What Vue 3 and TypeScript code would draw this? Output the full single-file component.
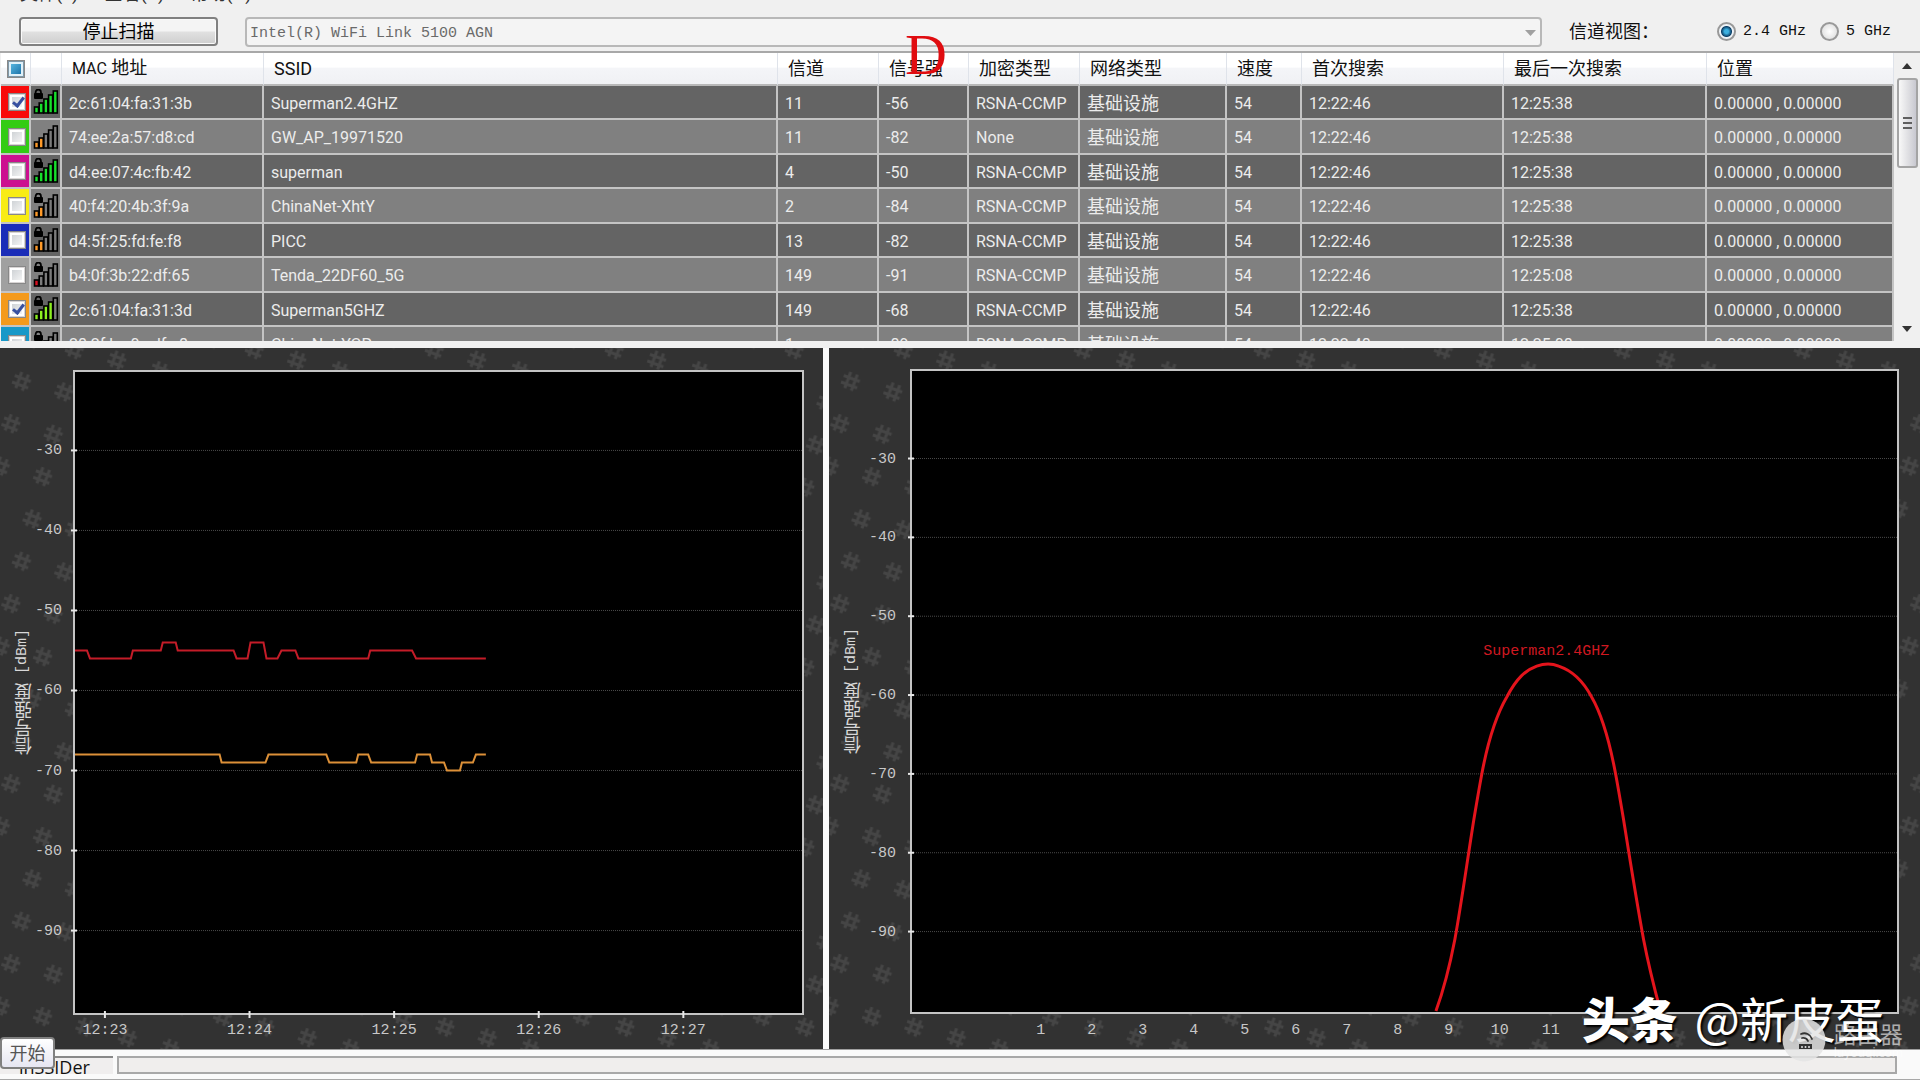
<script setup lang="ts">
import { ref } from 'vue'

interface Network {
  color: string
  checked: boolean
  locked: boolean
  bars: number
  barColor: string
  mac: string
  ssid: string
  channel: string
  rssi: string
  security: string
  first: string
  last: string
}

const net = (
  color: string, checked: boolean, locked: boolean, bars: number, barColor: string,
  mac: string, ssid: string, channel: string, rssi: string, security = 'RSNA-CCMP',
  last = '12:25:38', first = '12:22:46',
): Network => ({ color, checked, locked, bars, barColor, mac, ssid, channel, rssi, security, first, last })

const networks = ref<Network[]>([
  net('#f80a0a', true, true, 5, '#18e02c', '2c:61:04:fa:31:3b', 'Superman2.4GHZ', '11', '-56'),
  net('#33cc14', false, false, 2, '#ff9a28', '74:ee:2a:57:d8:cd', 'GW_AP_19971520', '11', '-82', 'None'),
  net('#cc1090', false, true, 5, '#18e02c', 'd4:ee:07:4c:fb:42', 'superman', '4', '-50'),
  net('#f8ec14', false, true, 2, '#ff9a28', '40:f4:20:4b:3f:9a', 'ChinaNet-XhtY', '2', '-84'),
  net('#1a2cb8', false, true, 2, '#ff9a28', 'd4:5f:25:fd:fe:f8', 'PICC', '13', '-82'),
  net('#a0a0a0', false, true, 1, '#d81020', 'b4:0f:3b:22:df:65', 'Tenda_22DF60_5G', '149', '-91', 'RSNA-CCMP', '12:25:08'),
  net('#f49a1c', true, true, 4, '#8cf020', '2c:61:04:fa:31:3d', 'Superman5GHZ', '149', '-68'),
  net('#1898c8', false, true, 2, '#ff9a28', '28:2f:bc:0c:df:a8', 'ChinaNet-YGP', '1', '-89', 'RSNA-CCMP', '12:25:08', '12:22:48'),
])

const headers = ['SSID', '信道', '信号强', '加密类型', '网络类型', '速度', '首次搜索', '最后一次搜索', '位置']
const barTops = [17, 13, 9, 5, 1]
const levels = [-30, -40, -50, -60, -70, -80, -90]
const band = ref('2.4')

const timeRange = { top: -20.2, bottom: -100.3 }
const channelRange = { top: -18.9, bottom: -100.2 }
const share = (dbm: number, r: { top: number; bottom: number }) =>
  ((r.top - dbm) / (r.top - r.bottom)) * 100

const times = ['12:23', '12:24', '12:25', '12:26', '12:27'].map((label, i) => ({
  label, at: ((30 + i * 145) / 729) * 100,
}))
const channels = Array.from({ length: 11 }, (_, i) => ({
  label: String(i + 1), at: ((129 + i * 51.1) / 987) * 100,
}))

// Each step is [from, to, level] along a 729-unit time axis.
type Step = [number, number, number]
const trace24: Step[] = [
  [0, 12, -55], [15, 56, -56], [58, 86, -55], [88, 101, -54], [103, 159, -55], [162, 173, -56],
  [176, 189, -54], [192, 203, -56], [207, 221, -55], [224, 294, -56], [296, 338, -55], [342, 412, -56],
]
const trace5: Step[] = [
  [0, 145, -68], [147, 191, -69], [194, 252, -68], [255, 282, -69], [284, 294, -68], [297, 341, -69],
  [343, 356, -68], [358, 370, -69], [373, 386, -70], [388, 399, -69], [402, 412, -68],
]
const toPoints = (steps: Step[]) =>
  steps.map(([a, b, v]) => {
    const y = share(v, timeRange).toFixed(2)
    return `${a},${y} ${b},${y}`
  }).join(' ')
</script>

<template>
  <main class="app">
    <nav class="menu"><span>文件(F)</span><span>查看(V)</span><span>帮助(H)</span></nav>

    <header class="toolbar">
      <button class="scan" type="button">停止扫描</button>
      <div class="adapter">
        <select aria-label="网卡" disabled>
          <option>Intel(R) WiFi Link 5100 AGN</option>
        </select>
        <svg width="11" height="6" viewBox="0 0 11 6"><path d="M0 0H11L5.5 6Z" fill="#a0a0a0" /></svg>
      </div>
      <fieldset class="bands">
        <legend>信道视图：</legend>
        <label><input v-model="band" type="radio" name="band" value="2.4">2.4 GHz</label>
        <label><input v-model="band" type="radio" name="band" value="5">5 GHz</label>
      </fieldset>
    </header>

    <section class="list">
      <div class="scroller">
        <table>
          <colgroup>
            <col class="w-check"><col class="w-icon"><col class="w-mac"><col><col class="w-chan">
            <col class="w-rssi"><col class="w-sec"><col class="w-type"><col class="w-speed">
            <col class="w-first"><col class="w-last"><col class="w-loc">
          </colgroup>
          <thead>
            <tr>
              <th class="pick"><input class="box mixed" type="checkbox" aria-label="全选"></th>
              <th></th>
              <th><span class="latin">MAC</span> 地址</th>
              <th v-for="h in headers" :key="h">{{ h }}</th>
            </tr>
          </thead>
          <tbody>
            <tr v-for="n in networks" :key="n.mac">
              <td class="pick" :style="{ backgroundColor: n.color }">
                <input v-model="n.checked" class="box" type="checkbox" :aria-label="n.ssid">
              </td>
              <td class="signal">
                <svg width="26" height="26" viewBox="0 0 26 26">
                  <rect
                    v-for="(t, i) in barTops" :key="i" :x="1.5 + i * 4.7" :y="t + 1" width="4" :height="23 - t"
                    :fill="i < n.bars ? n.barColor : '#7c7c7c'" stroke="#000" stroke-width="1.6"
                  />
                  <g v-if="n.locked">
                    <path d="M2.6 5V3.500A2.7 3 0 0 1 8 3.500V5" fill="none" stroke="#000" stroke-width="1.8" />
                    <rect x="1" y="4" width="9" height="6" rx="1" />
                  </g>
                </svg>
              </td>
              <td>{{ n.mac }}</td>
              <td>{{ n.ssid }}</td>
              <td>{{ n.channel }}</td>
              <td>{{ n.rssi }}</td>
              <td>{{ n.security }}</td>
              <td class="cjk">基础设施</td>
              <td>54</td>
              <td>{{ n.first }}</td>
              <td>{{ n.last }}</td>
              <td>0.00000 , 0.00000</td>
            </tr>
          </tbody>
        </table>
      </div>
      <div class="scrollbar">
        <button type="button" aria-label="上"><svg width="10" height="6" viewBox="0 0 10 6"><path d="M0 6H10L5 0Z" fill="#333" /></svg></button>
        <div class="thumb"><i></i><i></i><i></i></div>
        <button class="down" type="button" aria-label="下"><svg width="10" height="6" viewBox="0 0 10 6"><path d="M0 0H10L5 6Z" fill="#333" /></svg></button>
      </div>
      <span class="mark">D</span>
    </section>

    <section class="charts">
      <div class="panel time">
        <svg class="hashes" width="100%" height="100%">
          <defs>
            <pattern id="hash" x="8" y="5" width="43.65" height="43.65" patternUnits="userSpaceOnUse" patternTransform="rotate(14.04)">
              <path d="M19 13L17 30M26 14L24 31M13 18L30 20M12 25L29 27" stroke="#454545" stroke-width="3" fill="none" />
            </pattern>
          </defs>
          <rect width="100%" height="100%" fill="url(#hash)" />
        </svg>
        <h2>信号强度<span> [dBm]</span></h2>
        <div class="plot">
          <svg class="axes" width="100%" height="100%">
            <g v-for="l in levels" :key="l">
              <line class="grid" x1="0" x2="100%" :y1="share(l, timeRange) + '%'" :y2="share(l, timeRange) + '%'" />
              <line class="tick" x1="-4" x2="2" :y1="share(l, timeRange) + '%'" :y2="share(l, timeRange) + '%'" />
              <text x="-13" :y="share(l, timeRange) + '%'" dy="4" text-anchor="end">{{ l }}</text>
            </g>
            <svg v-for="t in times" :key="t.label" :x="t.at + '%'" y="100%" overflow="visible">
              <line class="tick" x1="0" x2="0" y1="-2" y2="5" />
              <text x="0" y="21" text-anchor="middle">{{ t.label }}</text>
            </svg>
            <svg width="100%" height="100%" viewBox="0 0 729 100" preserveAspectRatio="none">
              <polyline class="trace" :points="toPoints(trace24)" stroke="#c41c28" />
              <polyline class="trace" :points="toPoints(trace5)" stroke="#dc9038" />
            </svg>
          </svg>
        </div>
      </div>

      <div class="panel channel">
        <svg class="hashes" width="100%" height="100%"><rect width="100%" height="100%" fill="url(#hash)" /></svg>
        <h2>信号强度<span> [dBm]</span></h2>
        <div class="plot">
          <svg class="axes" width="100%" height="100%">
            <g v-for="l in levels" :key="l">
              <line class="grid" x1="0" x2="100%" :y1="share(l, channelRange) + '%'" :y2="share(l, channelRange) + '%'" />
              <line class="tick" x1="-4" x2="2" :y1="share(l, channelRange) + '%'" :y2="share(l, channelRange) + '%'" />
              <text x="-16" :y="share(l, channelRange) + '%'" dy="4" text-anchor="end">{{ l }}</text>
            </g>
            <svg v-for="c in channels" :key="c.label" :x="c.at + '%'" y="100%" overflow="visible">
              <text x="0" y="22" text-anchor="middle">{{ c.label }}</text>
            </svg>
            <svg width="100%" height="100%" viewBox="0 0 987 643" preserveAspectRatio="none">
              <path
                class="curve"
                d="M525 642C533 620 539 596 544 570C550 537 556 494 563 450C566 432 568 420 571 404C577 372 585 346 596 327C606 308 615 300 626 296C634 293 641 293 648 296C660 300 671 308 681 327C692 346 699 372 705 404C708 420 710 432 713 450C720 494 726 532 733 570C738 596 743 616 750 642"
              />
            </svg>
            <svg x="64.4%" y="43.6%" overflow="visible"><text class="name" text-anchor="middle" y="5">Superman2.4GHZ</text></svg>
          </svg>
        </div>
      </div>
    </section>

    <footer class="status">
      <div class="tab">inSSIDer</div>
      <div class="field"></div>
      <div class="tip">开始</div>
    </footer>

    <div class="credit"><b>头条</b> @新皮蛋</div>
    <div class="site">
      <svg width="44" height="44" viewBox="0 0 44 44">
        <circle cx="22" cy="22" r="21.5" fill="#e4e4e4" fill-opacity=".85" />
        <g fill="none" stroke="#333" stroke-width="1.8" stroke-linecap="round">
          <path d="M19 16A8 8 0 0 1 30 21M20 20A5 5 0 0 1 26 23" />
        </g>
        <path d="M17 26H30V31H17Z" fill="#333" />
        <g fill="#e4e4e4"><circle cx="20" cy="29" r="1" /><circle cx="23.500" cy="29" r="1" /><circle cx="27" cy="29" r="1" /></g>
      </svg>
      <div><strong>路由器</strong><small>luyouqi.com</small></div>
    </div>
  </main>
</template>

<style>
body {
  margin: 0;
  background: #f0f0f0;
}
</style>

<style scoped>
.app {
  position: relative;
  display: flex;
  flex-direction: column;
  min-height: 100vh;
  overflow: hidden;
  font-family: Roboto, "Noto Sans CJK SC", sans-serif;
  font-size: 16px;
  color: #111;
}
* {
  box-sizing: border-box;
}

.menu {
  display: flex;
  align-items: flex-end;
  gap: 26px;
  height: 4px;
  padding-left: 20px;
  overflow: hidden;
  font-size: 18px;
  line-height: 20px;
  color: #333;
}

.toolbar {
  display: flex;
  align-items: center;
  gap: 27px;
  height: 47px;
  padding: 8px 29px 0 19px;
}
.scan {
  width: 199px;
  height: 29px;
  padding: 0 0 3px;
  border: 2px solid #808080;
  border-radius: 4px;
  background: linear-gradient(#f4f4f4 0 48%, #e0e0e0 52%, #cecece);
  box-shadow: inset 0 0 0 1px #fafafa;
  font: 18px/22px "Noto Sans CJK SC", sans-serif;
  color: #000;
}
.adapter {
  position: relative;
  flex: 1;
}
.adapter select {
  display: block;
  width: 100%;
  height: 30px;
  padding: 4px 3px 0;
  border: 2px solid #b8b8b8;
  border-radius: 4px;
  background: #f4f4f4;
  appearance: none;
  font: 15px "Liberation Mono", monospace;
  color: #6a6a6a;
  opacity: 1;
}
.adapter svg {
  position: absolute;
  right: 6px;
  top: 13px;
}
.bands {
  display: flex;
  align-items: center;
  gap: 14px;
  margin: 0;
  padding: 0;
  border: 0;
  font: 15px "Liberation Mono", monospace;
}
.bands legend {
  float: left;
  width: 134px;
  padding: 0 0 4px;
  font: 18px/22px "Noto Sans CJK SC", sans-serif;
}
.bands label {
  display: flex;
  align-items: center;
  gap: 7px;
  white-space: nowrap;
}
.bands input {
  width: 19px;
  height: 19px;
  margin: 0;
  border: 2px solid #999;
  border-radius: 50%;
  background: radial-gradient(#fff, #d8d8d8);
  appearance: none;
}
.bands input:checked {
  background: radial-gradient(circle, #3cb0e0 0 2px, #0c4068 5px, #f0f4f8 6px);
}

.list {
  position: relative;
  display: flex;
  height: 290px;
  border-top: 2px solid #a8a8a8;
  background: #f0f0f0;
}
.scroller {
  flex: 1;
  overflow: hidden;
  padding-left: 1px;
}
table {
  width: 100%;
  table-layout: fixed;
  border-collapse: separate;
  border-spacing: 0;
}
.w-check { width: 30px; }
.w-icon { width: 31px; }
.w-mac { width: 202px; }
.w-chan { width: 101px; }
.w-rssi { width: 90px; }
.w-sec { width: 111px; }
.w-type { width: 147px; }
.w-speed { width: 75px; }
.w-first { width: 202px; }
.w-last { width: 203px; }
.w-loc { width: 187px; }
th {
  height: 33px;
  padding: 0 0 0 10px;
  border-right: 1px solid #dfe3ea;
  border-bottom: 2px solid #b8b8b8;
  background: linear-gradient(#fff 0 45%, #f4f5f8 50%, #f0f1f4);
  font-size: 18px;
  line-height: 24px;
  font-weight: 400;
  text-align: left;
  white-space: nowrap;
  overflow: hidden;
  color: #111;
}
.latin {
  font-size: 16px;
}
td {
  height: 34px;
  padding: 3px 0 0 7px;
  border-right: 2px solid #c4c4c4;
  border-bottom: 2px solid #c4c4c4;
  background: #646464;
  line-height: 24px;
  white-space: nowrap;
  overflow: hidden;
  color: #ececec;
}
tr:nth-child(even) td {
  height: 35px;
  background: #808080;
}
.cjk {
  font-size: 18px;
}
.pick,
.signal {
  padding: 0;
  text-align: center;
  line-height: 0;
}
td.pick {
  padding-left: 3px;
}
.signal svg {
  display: block;
  margin-left: 2px;
}
.box {
  width: 18px;
  height: 18px;
  margin: 0;
  border: 2px solid #d8d4d4;
  outline: 1px solid #888;
  outline-offset: -1px;
  background: linear-gradient(135deg, #c8ccd0, #fafafa);
  box-shadow: inset 0 0 0 2px #fff;
  appearance: none;
}
.box.mixed {
  border-color: #8098a8;
  background: linear-gradient(135deg, #60c0e8, #1468a0);
  box-shadow: inset 0 0 0 2px #e0f0f8;
}
.box:checked::after {
  content: "";
  display: block;
  width: 4px;
  height: 9px;
  margin: 0 0 0 5px;
  border: solid #3850a0;
  border-width: 0 3px 3px 0;
  transform: rotate(38deg);
}

.scrollbar {
  display: flex;
  flex-direction: column;
  align-items: center;
  width: 26px;
  background: #f0f0f0;
}
.scrollbar button {
  height: 25px;
  padding: 0;
  border: 0;
  background: none;
  line-height: 0;
}
.scrollbar .down {
  margin-top: auto;
}
.thumb {
  display: flex;
  flex-direction: column;
  align-items: center;
  justify-content: center;
  gap: 3px;
  width: 21px;
  height: 90px;
  border: 2px solid #a4a4a4;
  border-radius: 3px;
  background: linear-gradient(90deg, #f8f8f8, #dcdce0 60%, #c8c8d0);
}
.thumb i {
  width: 9px;
  height: 2px;
  background: #606060;
}
.mark {
  position: absolute;
  left: 905px;
  top: -28px;
  font: 58px/60px "Liberation Serif", serif;
  color: #e00c10;
}

.charts {
  display: grid;
  grid-template-columns: minmax(0, 823fr) minmax(0, 1091fr);
  flex: 1;
  gap: 6px;
  min-height: 400px;
  margin-top: 7px;
  background: #fafafa;
}
.panel {
  position: relative;
  display: flex;
  align-items: center;
  min-width: 0;
  background: #323232;
}
.time {
  padding: 22px 19px 34px 14px;
}
.channel {
  padding: 21px 21px 35px 14px;
}
.hashes {
  position: absolute;
  inset: 0;
}
h2 {
  position: relative;
  width: 18px;
  margin: 0 41px 0 0;
  writing-mode: vertical-rl;
  transform: rotate(180deg);
  font: 18px/18px "Noto Sans CJK SC", sans-serif;
  white-space: pre;
  color: #d8d8d8;
}
.channel h2 {
  margin-right: 49px;
}
h2 span {
  font: 15px/18px "Liberation Mono", monospace;
}
.plot {
  position: relative;
  flex: 1;
  align-self: stretch;
  min-width: 0;
  border: 2px solid #c4c4c4;
  background: #000;
}
.axes {
  position: absolute;
  inset: 0;
  overflow: visible;
  font: 15px "Liberation Mono", monospace;
  fill: #c8c8c8;
}
.grid {
  stroke: #4a4a4a;
  stroke-dasharray: 1 1;
}
.tick {
  stroke: #e8e8e8;
  stroke-width: 2;
}
.trace {
  fill: none;
  stroke-width: 2;
  vector-effect: non-scaling-stroke;
}
.curve {
  fill: none;
  stroke: #e4141c;
  stroke-width: 3;
  vector-effect: non-scaling-stroke;
}
.name {
  fill: #d01820;
}

.status {
  position: relative;
  display: flex;
  gap: 4px;
  height: 31px;
  padding: 6px 23px 5px 0;
  border-top: 1px solid #a0a0a0;
  border-bottom: 1px solid #a8a8a8;
  background: #fafafa;
}
.tab {
  width: 113px;
  padding-left: 19px;
  border-top: 2px solid #888;
  background: #f0eeee;
  font: 18px/18px "Open Sans", sans-serif;
}
.field {
  flex: 1;
  border: 2px solid #a8a8a8;
  background: #f0eeed;
}
.tip {
  position: absolute;
  left: 0;
  top: -13px;
  width: 55px;
  height: 32px;
  border: 2px solid #808080;
  border-radius: 4px;
  background: linear-gradient(#fff, #e6e6f2);
  font: 18px/26px "Noto Sans CJK SC", sans-serif;
  text-align: center;
  color: #555;
}

.credit {
  position: absolute;
  right: 36px;
  bottom: 28px;
  font: 48px/70px "Noto Sans CJK SC", sans-serif;
  color: #fff;
  text-shadow: 2px 2px 2px #000;
}
.credit b {
  margin-right: 6px;
  font-weight: 900;
}
.site {
  position: absolute;
  right: 17px;
  bottom: 18px;
  display: flex;
  gap: 8px;
  color: #fff;
}
.site div {
  display: flex;
  flex-direction: column;
  padding-top: 3px;
  opacity: .6;
}
.site strong {
  font: 23px/24px "Noto Sans CJK SC", sans-serif;
}
.site small {
  font: 12px/16px "Noto Sans", sans-serif;
}
</style>
